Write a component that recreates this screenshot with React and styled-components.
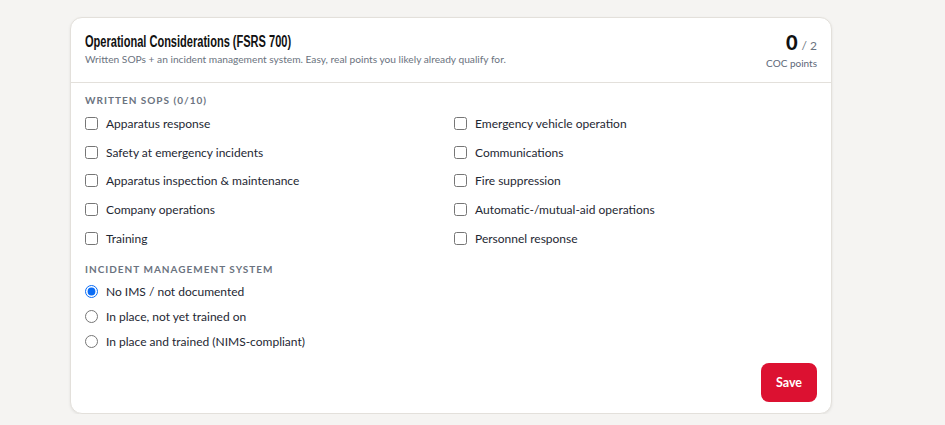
import { useState } from "react";
import styled, { createGlobalStyle } from "styled-components";

const GlobalStyle = createGlobalStyle`
  html, body {
    margin: 0;
    background: #f5f4f2;
  }
  body {
    font-family: "Lato", "Noto Sans", sans-serif;
    color: #1e2733;
  }
`;

const Page = styled.div`
  padding: 17px 0 0 70px;
`;

const Card = styled.section`
  width: 762px;
  background: #fff;
  border: 1px solid #e3e0db;
  border-radius: 12px;
  box-shadow: 0 1px 3px rgba(0, 0, 0, 0.08);
  box-sizing: border-box;
`;

const Header = styled.header`
  display: flex;
  justify-content: space-between;
  align-items: flex-start;
  padding: 14px 14px 13px 14px;
  border-bottom: 1px solid #e3e0db;
`;

// condensed display face for the card title
const Title = styled.h2`
  margin: 0;
  font-family: "Liberation Sans", "Noto Sans", sans-serif;
  font-size: 16px;
  line-height: 20px;
  font-weight: 700;
  color: #111;

  span {
    display: inline-block;
    transform: scaleX(0.69);
    transform-origin: left center;
    white-space: nowrap;
  }
`;

const Subtitle = styled.p`
  margin: 0;
  font-size: 10.2px;
  line-height: 14px;
  color: #6b7380;
`;

const Score = styled.div`
  text-align: right;
`;

const ScoreValue = styled.div`
  display: flex;
  justify-content: flex-end;
  align-items: baseline;
  gap: 4px;
  font-size: 20px;
  font-weight: 900;
  color: #111;
  line-height: 20px;

  span {
    font-size: 12px;
    line-height: 12px;
    font-weight: 400;
    color: #6b7380;
  }
`;

const ScoreLabel = styled.div`
  margin-top: 5px;
  font-size: 10px;
  line-height: 12px;
  color: #5d6878;
`;

const Body = styled.div`
  padding: 11px 14px 11px 14px;
`;

const SectionLabel = styled.div`
  font-size: 10px;
  line-height: 12px;
  font-weight: 700;
  letter-spacing: 1px;
  color: #6b7380;
  text-transform: uppercase;
  margin-bottom: ${(p) => p.$gap}px;
`;

const OptionGrid = styled.div`
  display: grid;
  grid-template-columns: 1fr 1fr;
  column-gap: 6px;
  margin-bottom: 10px;
`;

const Column = styled.div`
  display: flex;
  flex-direction: column;
`;

const Option = styled.label`
  display: flex;
  align-items: center;
  gap: 8px;
  height: ${(p) => p.$h}px;
  font-size: 12px;
  color: #1e2733;
  cursor: pointer;

  input {
    margin: 0;
    width: 13px;
    height: 13px;
    accent-color: #0a6cf5;
  }
`;

const Footer = styled.div`
  display: flex;
  justify-content: flex-end;
  margin-top: 9px;
`;

const SaveButton = styled.button`
  background: #dc1131;
  color: #fff;
  border: none;
  border-radius: 8px;
  padding: 0 15px;
  height: 39px;
  font-family: inherit;
  font-size: 12.5px;
  font-weight: 700;
  cursor: pointer;
`;

const leftSops = [
  "Apparatus response",
  "Safety at emergency incidents",
  "Apparatus inspection & maintenance",
  "Company operations",
  "Training",
];

const rightSops = [
  "Emergency vehicle operation",
  "Communications",
  "Fire suppression",
  "Automatic-/mutual-aid operations",
  "Personnel response",
];

const imsOptions = [
  "No IMS / not documented",
  "In place, not yet trained on",
  "In place and trained (NIMS-compliant)",
];

export default function App() {
  let [checked, setChecked] = useState({});
  let [ims, setIms] = useState(0);

  const toggle = (name) => setChecked({ ...checked, [name]: !checked[name] });

  const renderCol = (items) => (
    <Column>
      {items.map((name) => (
        <Option key={name} $h={28.75}>
          <input type="checkbox" checked={!!checked[name]} onChange={() => toggle(name)} />
          {name}
        </Option>
      ))}
    </Column>
  );

  return (
    <Page>
      <GlobalStyle />
      <Card>
        <Header>
          <div>
            <Title>
              <span>Operational Considerations (FSRS 700)</span>
            </Title>
            <Subtitle>Written SOPs + an incident management system. Easy, real points you likely already qualify for.</Subtitle>
          </div>
          <Score>
            <ScoreValue>
              0<span>/ 2</span>
            </ScoreValue>
            <ScoreLabel>COC points</ScoreLabel>
          </Score>
        </Header>
        <Body>
          <SectionLabel $gap={3}>Written SOPs (0/10)</SectionLabel>
          <OptionGrid>
            {renderCol(leftSops)}
            {renderCol(rightSops)}
          </OptionGrid>
          <SectionLabel $gap={4}>Incident management system</SectionLabel>
          <Column>
            {imsOptions.map((name, i) => (
              <Option key={name} $h={25}>
                <input type="radio" name="ims" checked={ims === i} onChange={() => setIms(i)} />
                {name}
              </Option>
            ))}
          </Column>
          <Footer>
            <SaveButton>Save</SaveButton>
          </Footer>
        </Body>
      </Card>
    </Page>
  );
}
